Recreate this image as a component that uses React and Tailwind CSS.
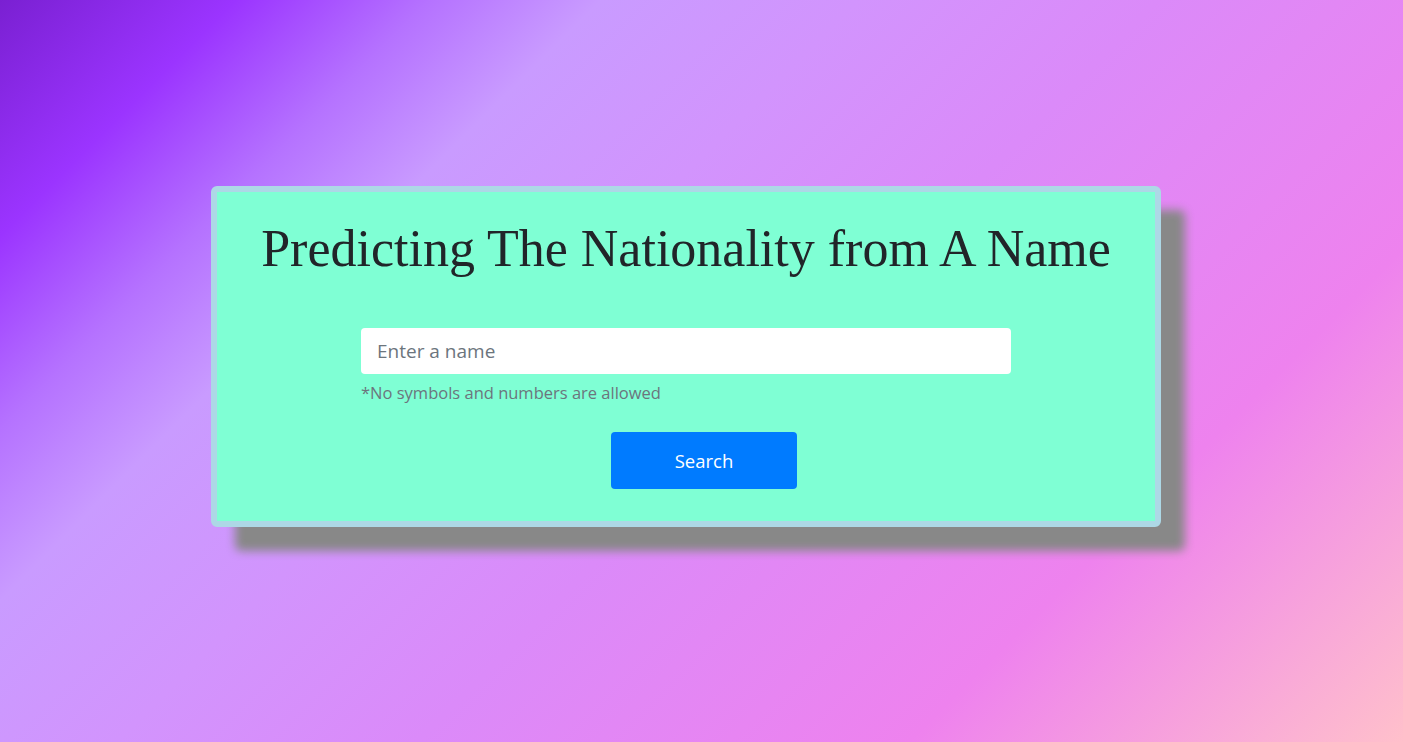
export default function App() {
  return (
    <div className="h-[742px] w-full overflow-hidden bg-[linear-gradient(135deg,#7a20d2_0%,#9b34ff_11%,#b572ff_20%,#c99bff_28%,#d294fd_40%,#db8af9_54%,#ee82ee_77%,#ffc0cb_100%)] pt-[186px] pl-[211px]">
      <div className="w-[950px] h-[341px] border-[6px] border-[#add8e6] rounded-[6px] bg-[#7fffd4] shadow-[24px_24px_10px_#888] flex flex-col">
        <h1 className="mt-[28px] h-[58px] leading-[58px] text-center text-[52px] text-[#212529] font-['Liberation_Serif',serif] whitespace-nowrap">
          Predicting The Nationality from A Name
        </h1>
        <div className="ml-[144px] mt-[50px] w-[650px] font-['Open_Sans',sans-serif]">
          <input
            type="text"
            placeholder="Enter a name"
            className="block w-full h-[46px] rounded-[4px] bg-white px-4 text-[19px] text-[#495057] placeholder:text-[#6c757d] outline-none"
          />
          <p className="mt-[7px] h-[24px] leading-[24px] text-[16.5px] text-[#6c757d]">
            *No symbols and numbers are allowed
          </p>
        </div>
        <button className="ml-[394px] mt-[27px] w-[186px] h-[57px] rounded-[4px] bg-[#007bff] text-white text-[18.5px] font-['Open_Sans',sans-serif]">
          Search
        </button>
      </div>
    </div>
  );
}
